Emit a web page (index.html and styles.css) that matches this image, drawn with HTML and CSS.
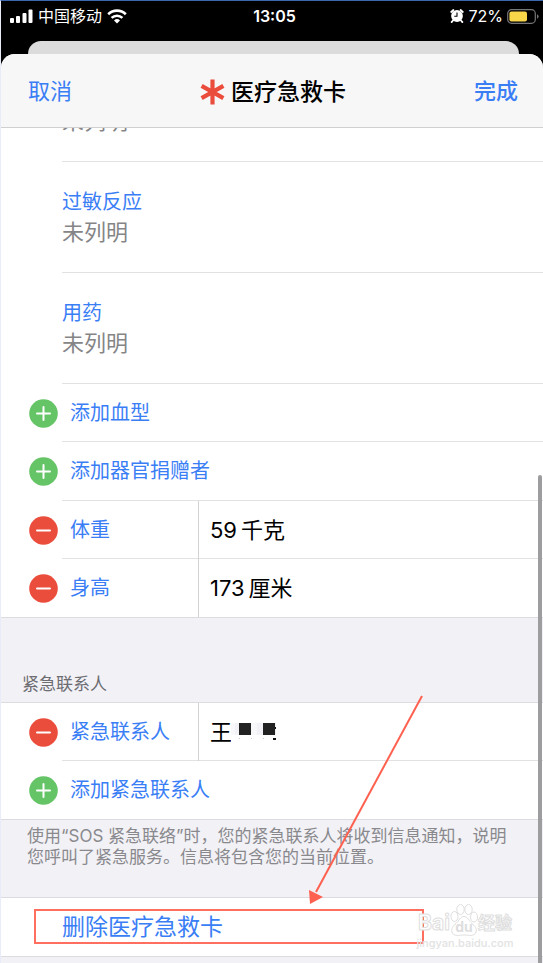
FILE: index.html
```html
<!DOCTYPE html>
<html lang="zh-CN">
<head>
<meta charset="utf-8">
<meta name="viewport" content="width=device-width, initial-scale=1">
<title>医疗急救卡</title>
<link rel="stylesheet" href="styles.css">
</head>
<body>
<svg class="defs" aria-hidden="true">
  <symbol id="add" viewBox="0 0 29 29"><circle cx="14.5" cy="14.5" r="14.3" fill="#65c466"/><path d="M14.5 8v13M8 14.5h13" stroke="#fff" stroke-width="2" stroke-linecap="round"/></symbol>
  <symbol id="remove" viewBox="0 0 29 29"><circle cx="14.5" cy="14.5" r="14.3" fill="#eb4d3d"/><path d="M8 14.5h13" stroke="#fff" stroke-width="2" stroke-linecap="round"/></symbol>
</svg>
<div class="phone">
  <div class="status">
    <div class="carrier">
      <svg width="23" height="15" viewBox="0 0 23 15" fill="#fff"><rect x="0" y="9" width="4" height="5" rx="1"/><rect x="6" y="7" width="4" height="7" rx="1"/><rect x="12.500" y="4" width="4" height="10" rx="1"/><rect x="18.500" y="0.500" width="4" height="13.500" rx="1"/></svg>
      <span>中国移动</span>
      <svg width="20" height="15" viewBox="0 0 20 15" fill="none" stroke="#fff" stroke-width="2.600"><path d="M1.200 5.200a12.600 12.600 0 0 1 17.600 0"/><path d="M4.600 8.900a7.800 7.800 0 0 1 10.800 0"/><path d="M10 14.500l-3-3.100a4.300 4.300 0 0 1 6 0z" fill="#fff" stroke="none"/></svg>
    </div>
    <time class="clock">13:05</time>
    <div class="power">
      <svg width="14" height="14" viewBox="0 0 14 14"><circle cx="7" cy="7" r="5.900" fill="#fff"/><path d="M1.200 3l2.200-2M12.800 3l-2.200-2M3 11.500l-1.400 1.600M11 11.500l1.400 1.600" stroke="#fff" stroke-width="1.800" stroke-linecap="round"/><path d="M7 3.500V7.300H4.300" fill="none" stroke="#000" stroke-width="1.100"/></svg>
      <span>72%</span>
      <svg width="32" height="15" viewBox="0 0 32 15"><rect x="0.700" y="0.700" width="27.600" height="13.600" rx="3.800" fill="none" stroke="#77777a" stroke-width="1.200"/><rect x="2.400" y="2.400" width="17.600" height="10.200" rx="2" fill="#f7d64a"/><path d="M30 5.200q1.600.7 1.600 2.300t-1.600 2.300z" fill="#77777a"/></svg>
    </div>
  </div>
  <div class="backcard"></div>
  <main class="sheet">
    <header class="nav">
      <button class="link" type="button">取消</button>
      <h1><svg width="25" height="26" viewBox="0 0 25 26" stroke="#eb4d3d" stroke-width="4.200"><path d="M12.500 0.500v25M1.600 6.800l21.800 12.400M1.600 19.200L23.400 6.800"/></svg>医疗急救卡</h1>
      <button class="link done" type="button">完成</button>
    </header>

    <section class="notes">
      <div class="note cut"><p>未列明</p></div>
      <div class="note"><h2>过敏反应</h2><p>未列明</p></div>
      <div class="note"><h2>用药</h2><p>未列明</p></div>
    </section>

    <section class="list">
      <button class="row" type="button"><svg class="badge"><use href="#add"/></svg><span class="cell">添加血型</span></button>
      <button class="row" type="button"><svg class="badge"><use href="#add"/></svg><span class="cell">添加器官捐赠者</span></button>
      <div class="row"><button class="icon" type="button" aria-label="移除体重"><svg class="badge"><use href="#remove"/></svg></button><div class="cell"><label for="weight">体重</label><input id="weight" value="59&#8201;千克"></div></div>
      <div class="row"><button class="icon" type="button" aria-label="移除身高"><svg class="badge"><use href="#remove"/></svg></button><div class="cell"><label for="height">身高</label><input id="height" value="173&#8201;厘米"></div></div>
    </section>

    <h2 class="caption">紧急联系人</h2>
    <section class="list framed">
      <div class="row"><button class="icon" type="button" aria-label="移除紧急联系人"><svg class="badge"><use href="#remove"/></svg></button><div class="cell"><label for="contact">紧急联系人</label><input id="contact" class="name" value="王"><svg class="mosaic" width="46" height="22" viewBox="0 0 46 22"><path fill="#f1f1f6" d="M0 2h45v12H0z"/><path fill="#f8f8fa" d="M0 2h4v12H0zM20 2h6v12h-6z"/><path fill="#222" d="M8 2h12v12H8zM32 2h12v12H32z"/><path fill="#111" d="M42 17h3v2h-3zM44 6h1v2h-1z"/><path fill="#ccc" d="M8 17h1v1H8zM20 17h1v1h-1zM32 17h1v1h-1z"/></svg></div></div>
      <button class="row" type="button"><svg class="badge"><use href="#add"/></svg><span class="cell">添加紧急联系人</span></button>
    </section>
    <p class="hint">使用“SOS 紧急联络”时，您的紧急联系人将收到信息通知，说明您呼叫了紧急服务。信息将包含您的当前位置。</p>

    <section class="danger">
      <button class="delete" type="button">删除医疗急救卡</button>
      <div class="marker"></div>
      <svg class="arrow" width="116" height="210" viewBox="0 0 116 210"><path d="M114 1L8 197" stroke="#ff6150" stroke-width="2"/><path d="M1 195l14 7-13 7z" fill="#ff6150"/></svg>
      <div class="watermark">
        <div class="brand"><span>Bai</span><svg width="28" height="32" viewBox="0 0 28 32" fill="#fff" stroke="#dedede"><ellipse cx="4.500" cy="12.500" rx="3.500" ry="5"/><ellipse cx="10.500" cy="5.500" rx="3.700" ry="5"/><ellipse cx="18.500" cy="5.500" rx="3.700" ry="5"/><ellipse cx="24" cy="13" rx="3.500" ry="5"/><path d="M14 12.500c-4 0-5 4.500-8 7-3 2.500-5 5-4 8.500 1.500 5 7.500 3 12 3s10.500 2 12-3c1-3.500-1-6-4-8.500-3-2.500-4-7-8-7z"/><text x="14" y="28" text-anchor="middle">du</text></svg><span class="han">经验</span></div>
        <div class="site">jingyan.baidu.com</div>
      </div>
    </section>
    <div class="scrollbar"></div>
  </main>
</div>
</body>
</html>
```
FILE: styles.css
```css
* { box-sizing: border-box; }
body {
  margin: 0;
  font-family: Inter, "Noto Sans CJK SC", sans-serif;
  font-size: 22px;
  line-height: 30px;
  color: #000;
  background: #f2f1f6;
}
h1, h2, p { margin: 0; font-weight: 400; }
button, input {
  margin: 0;
  padding: 0;
  border: 0;
  background: none;
  font: inherit;
  color: inherit;
  text-align: left;
}
svg { display: block; flex: none; }
.defs { position: absolute; width: 0; height: 0; }
.phone {
  min-height: 100vh;
  display: flex;
  flex-direction: column;
  border-top: 1px solid #3d66b0;
  border-left: 1px solid #e8ecf8;
  background: #000;
  overflow: hidden;
}
.status {
  display: grid;
  grid-template-columns: 1fr auto 1fr;
  align-items: center;
  height: 26px;
  margin-bottom: 14px;
  padding: 0 4px 0 9px;
  color: #fff;
  font-size: 16px;
}
.carrier, .power { display: flex; align-items: center; gap: 5px; }
.power { justify-content: flex-end; gap: 4px; }
.clock { font-weight: 600; }
.backcard {
  height: 13px;
  margin: 0 24px 0 27px;
  border-radius: 13px 13px 0 0;
  background: #dcdcdc;
}
.sheet {
  position: relative;
  flex: 1;
  display: flex;
  flex-direction: column;
  border-radius: 14px 14px 0 0;
  background: #f2f1f6;
  overflow: hidden;
}
.nav {
  display: grid;
  grid-template-columns: 1fr auto 1fr;
  align-items: center;
  height: 74px;
  padding: 0 25px 0 27px;
  border-bottom: 1px solid #d0d0d2;
  background: #f7f7f7;
}
.link, .delete, .row, .note h2 { color: #3a7ef6; }
.done { justify-self: end; font-weight: 500; }
.nav h1 {
  display: flex;
  align-items: center;
  gap: 6px;
  padding-top: 2px;
  font-size: 23px;
  font-weight: 500;
}
.notes { background: #fff; padding-left: 61px; }
.note {
  display: flex;
  flex-direction: column;
  justify-content: flex-end;
  height: 111px;
  padding-bottom: 25px;
  border-bottom: 1px solid #e2e2e4;
}
.note.cut { height: 34px; overflow: hidden; }
.note h2 { font-size: 20px; }
.note p { color: #858587; }
.list { background: #fff; }
.framed { border-top: 1px solid #dcdce0; }
.row {
  display: flex;
  align-items: center;
  width: 100%;
  height: 58px;
  padding-left: 28px;
  font-size: 20px;
}
.row:nth-child(even) { height: 59px; }
.badge { width: 29px; height: 29px; }
.cell {
  flex: 1;
  align-self: stretch;
  display: flex;
  align-items: center;
  margin-left: 4px;
  padding-left: 8px;
  line-height: 31px;
  box-shadow: inset 0 -1px #e2e2e4;
}
.row:last-child { border-bottom: 1px solid #dcdce0; }
.row:last-child .cell { box-shadow: none; }
.cell label {
  align-self: stretch;
  display: flex;
  align-items: center;
  width: 129px;
  margin-right: 11px;
  border-right: 1px solid #d2d2d4;
}
.cell input { flex: 1; min-width: 0; color: #000; font-size: 22px; }
.cell .name { flex: none; width: 21px; }
.caption {
  height: 84px;
  padding: 51px 21px 0;
  font-size: 17px;
  color: #6c6c71;
}
.hint {
  height: 77px;
  padding: 6px 30px 0 26px;
  font-size: 17px;
  line-height: 21px;
  color: #89898d;
}
.danger {
  position: relative;
  border-top: 1px solid #dcdce0;
  border-bottom: 1px solid #dcdce0;
  background: #fff;
}
.delete { width: 100%; height: 58px; padding-left: 61px; font-size: 23px; }
.marker {
  position: absolute;
  top: 11px;
  left: 33px;
  right: 119px;
  bottom: 12px;
  border: 2px solid #ff6e5e;
}
.arrow { position: absolute; right: 119px; bottom: 51px; }
.watermark {
  position: absolute;
  top: 6px;
  right: 28px;
  width: 100px;
  font-weight: 700;
  color: #fff;
  -webkit-text-stroke: 1px #dedede;
}
.brand { display: flex; align-items: flex-end; justify-content: center; height: 32px; font-size: 21px; line-height: 26px; }
.brand text { font-size: 14px; stroke: none; fill: #dedede; -webkit-text-stroke: 0; }
.brand .han { font-size: 17px; }
.site { font-size: 11px; line-height: 14px; text-align: center; color: #e2e2e2; -webkit-text-stroke: 0; font-weight: 500; }
.scrollbar {
  position: absolute;
  top: 421px;
  right: 1px;
  bottom: 0;
  width: 4px;
  border-radius: 2px 2px 0 0;
  background: #9d9d9f;
}
```
